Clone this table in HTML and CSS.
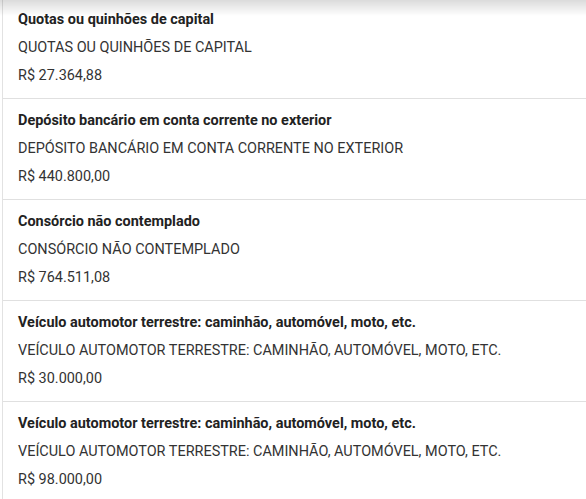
FILE: index.html
```html
<!DOCTYPE html>
<html lang="pt-BR">
  <head>
    <meta charset="UTF-8" />
    <meta name="viewport" content="width=device-width, initial-scale=1.0" />
    <title>Bens e direitos</title>
    <link rel="stylesheet" href="styles.css">
  </head>
  <body>
    <div class="top-shadow"></div>
    <ul class="asset-list">
      <li class="asset">
        <div class="asset-title">Quotas ou quinhões de capital</div>
        <div class="asset-desc">QUOTAS OU QUINHÕES DE CAPITAL</div>
        <div class="asset-value">R$ 27.364,88</div>
      </li>
      <li class="asset">
        <div class="asset-title">Depósito bancário em conta corrente no exterior</div>
        <div class="asset-desc">DEPÓSITO BANCÁRIO EM CONTA CORRENTE NO EXTERIOR</div>
        <div class="asset-value">R$ 440.800,00</div>
      </li>
      <li class="asset">
        <div class="asset-title">Consórcio não contemplado</div>
        <div class="asset-desc">CONSÓRCIO NÃO CONTEMPLADO</div>
        <div class="asset-value">R$ 764.511,08</div>
      </li>
      <li class="asset">
        <div class="asset-title">Veículo automotor terrestre: caminhão, automóvel, moto, etc.</div>
        <div class="asset-desc">VEÍCULO AUTOMOTOR TERRESTRE: CAMINHÃO, AUTOMÓVEL, MOTO, ETC.</div>
        <div class="asset-value">R$ 30.000,00</div>
      </li>
      <li class="asset">
        <div class="asset-title">Veículo automotor terrestre: caminhão, automóvel, moto, etc.</div>
        <div class="asset-desc">VEÍCULO AUTOMOTOR TERRESTRE: CAMINHÃO, AUTOMÓVEL, MOTO, ETC.</div>
        <div class="asset-value">R$ 98.000,00</div>
      </li>
    </ul>
  </body>
</html>
```

FILE: styles.css
```css
body {
  margin: 0;
  padding: 0;
  background-color: #fff;
  font-family: Roboto, "Liberation Sans", sans-serif;
  overflow: hidden;
}
.top-shadow {
  position: fixed;
  top: 0;
  left: 0;
  right: 0;
  height: 16px;
  background: linear-gradient(to bottom, rgba(0, 0, 0, 0.14), rgba(0, 0, 0, 0));
  pointer-events: none;
}
.asset-list {
  list-style: none;
  margin: -2px 0 0 2px;
  padding: 0;
  border-left: 1px solid #e2e2e2;
}
.asset {
  padding: 8px 16px 8px 15px;
  border-bottom: 1px solid #e0e0e0;
  font-size: 14.45px;
  line-height: 28px;
  color: #333;
  white-space: nowrap;
}
.asset-title {
  font-weight: 700;
  color: #222;
}
```
